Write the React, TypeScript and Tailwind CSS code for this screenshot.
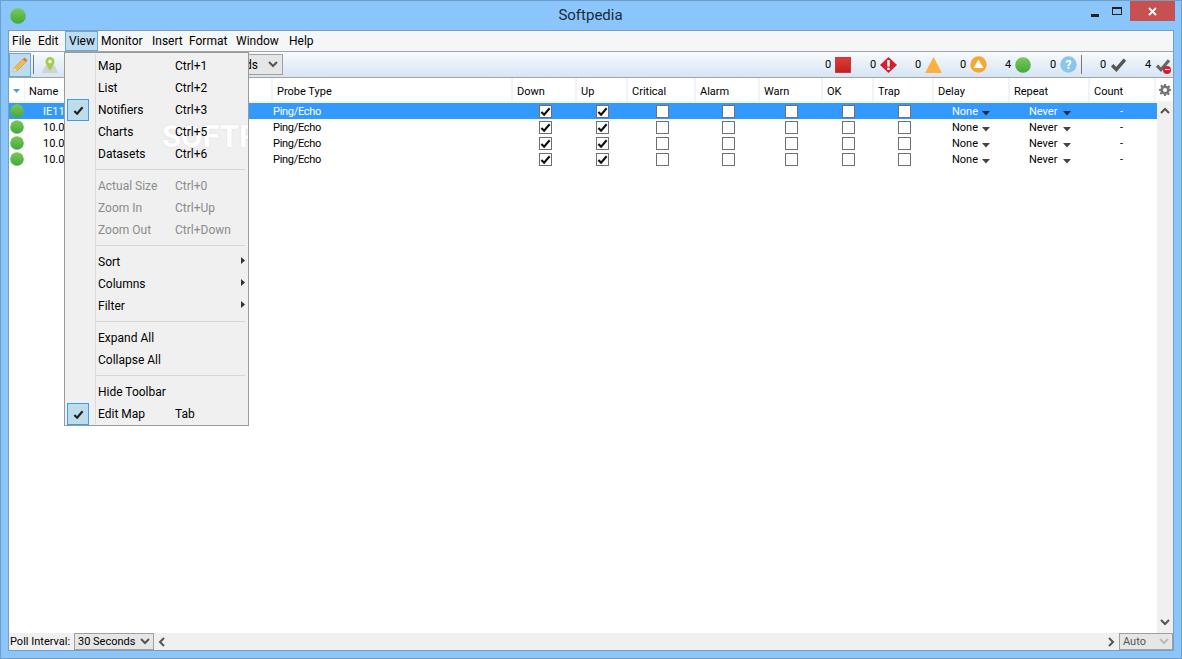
import React from 'react';

const font = { fontFamily: 'Tahoma, Roboto, sans-serif' };

const gridCols =
	'grid grid-cols-[15px_248px_240px_64px_51px_68px_64px_63px_51px_60px_76px_80px_66px]';

const columns = [
	'Probe Type',
	'Down',
	'Up',
	'Critical',
	'Alarm',
	'Warn',
	'OK',
	'Trap',
	'Delay',
	'Repeat',
	'Count',
];

const rows = ['IE11', '10.0', '10.0', '10.0'];

const menus = [
	{ label: 'File', cls: 'w-[26px]' },
	{ label: 'Edit', cls: 'w-[30px]' },
	{ label: 'View', cls: 'w-[33px] border border-[#69a7d6] bg-[#bcdcf2]' },
	{ label: 'Monitor', cls: 'w-[51px]' },
	{ label: 'Insert', cls: 'w-[37px]' },
	{ label: 'Format', cls: 'w-[47px]' },
	{ label: 'Window', cls: 'w-[53px]' },
	{ label: 'Help', cls: 'w-[35px]' },
];

const GreenDot: React.FC<{ size?: number }> = ({ size = 15 }) => (
	<svg width={size} height={size} viewBox="0 0 16 16" className="shrink-0">
		<defs>
			<linearGradient id="greenDot" x1="0" y1="0" x2="0" y2="1">
				<stop offset="0" stopColor="#7cc85a" />
				<stop offset="1" stopColor="#43a83c" />
			</linearGradient>
		</defs>
		<circle cx="8" cy="8" r="7.8" fill="url(#greenDot)" />
	</svg>
);

const CheckMark: React.FC<{ className?: string; size?: number }> = ({
	className = 'text-[#2b2b2b]',
	size = 11,
}) => (
	<svg width={size} height={size} viewBox="0 0 12 12" className={className}>
		<path d="M1.5 6.5 L4.5 9.5 L10.5 2.5" fill="none" stroke="currentColor" strokeWidth="2.4" />
	</svg>
);

const Box: React.FC<{ checked?: boolean }> = ({ checked }) => (
	<div className="flex h-[13px] w-[13px] items-center justify-center border border-[#707070] bg-white">
		{checked && <CheckMark size={11} className="text-[#111]" />}
	</div>
);

const Caret: React.FC<{ selected: boolean }> = ({ selected }) => (
	<svg width="8" height="5" viewBox="0 0 8 5" className="mt-[4px]">
		<path d="M0 0 H8 L4 4.5 Z" fill={selected ? '#1f2d45' : '#444'} />
	</svg>
);

const Chevron: React.FC<{ dir: 'up' | 'down' | 'left' | 'right'; color?: string }> = ({
	dir,
	color = '#555',
}) => {
	const d = {
		up: 'M1 6 L5 2 L9 6',
		down: 'M1 2 L5 6 L9 2',
		left: 'M6 1 L2 5 L6 9',
		right: 'M2 1 L6 5 L2 9',
	}[dir];
	return (
		<svg width="10" height="10" viewBox="0 0 10 10">
			<path d={d} fill="none" stroke={color} strokeWidth="2" />
		</svg>
	);
};

const StatusCount: React.FC<{ n: number; className: string; children: React.ReactNode }> = ({
	n,
	className,
	children,
}) => (
	<div className={`flex items-center gap-[4px] ${className}`}>
		<span className="w-[6px]">{n}</span>
		{children}
	</div>
);

const StatusBar = () => (
	<div className="ml-auto flex items-center">
		<StatusCount n={0} className="w-[45px]">
			<div className="h-4 w-4 border border-[#c93a3a] bg-gradient-to-b from-[#e03a3a] to-[#c02020]" />
		</StatusCount>
		<StatusCount n={0} className="w-[45px]">
			<svg width="17" height="16" viewBox="0 0 17 16">
				<path d="M8.5 0 L17 8 L8.5 16 L0 8 Z" fill="#d3202c" />
				<rect x="7.3" y="3" width="2.4" height="6.5" fill="#fff" />
				<rect x="7.3" y="10.6" width="2.4" height="2.4" fill="#fff" />
			</svg>
		</StatusCount>
		<StatusCount n={0} className="w-[45px]">
			<svg width="17" height="16" viewBox="0 0 17 16">
				<path d="M8.5 0 L17 16 H0 Z" fill="#fbb040" />
			</svg>
		</StatusCount>
		<StatusCount n={0} className="w-[45px]">
			<svg width="17" height="17" viewBox="0 0 17 17">
				<circle cx="8.5" cy="8.5" r="8.2" fill="#f6a830" />
				<path d="M8.5 3.5 L13.5 12 H3.500 Z" fill="#fff" />
			</svg>
		</StatusCount>
		<StatusCount n={4} className="w-[45px]">
			<GreenDot size={16} />
		</StatusCount>
		<StatusCount n={0} className="w-[26px]">
			<svg width="17" height="17" viewBox="0 0 17 17" className="shrink-0">
				<circle cx="8.5" cy="8.5" r="8.2" fill="#8cc4ea" />
				<text x="8.5" y="13" textAnchor="middle" fontSize="12" fontWeight="700" fill="#fff">
					?
				</text>
			</svg>
		</StatusCount>
		<div className="mr-[18px] ml-[5px] h-[19px] w-px bg-[#777]" />
		<StatusCount n={0} className="w-[45px]">
			<CheckMark size={17} className="text-[#555]" />
		</StatusCount>
		<div className="flex w-[28px] items-center gap-[4px]">
			<span className="w-[6px]">4</span>
			<div className="relative h-4 w-4 shrink-0">
				<CheckMark size={16} className="text-[#666]" />
				<div className="absolute right-0 bottom-[-1px] flex h-[8px] w-[8px] items-center justify-center rounded-full bg-[#d3202c]">
					<div className="h-[1px] w-[5px] bg-white" />
				</div>
			</div>
		</div>
	</div>
);

type MenuEntry = {
	label?: string;
	shortcut?: string;
	checked?: boolean;
	disabled?: boolean;
	sub?: boolean;
	gap?: boolean;
};

const viewMenu: MenuEntry[] = [
	{ label: 'Map', shortcut: 'Ctrl+1' },
	{ label: 'List', shortcut: 'Ctrl+2' },
	{ label: 'Notifiers', shortcut: 'Ctrl+3', checked: true },
	{ label: 'Charts', shortcut: 'Ctrl+5' },
	{ label: 'Datasets', shortcut: 'Ctrl+6' },
	{ gap: true },
	{ label: 'Actual Size', shortcut: 'Ctrl+0', disabled: true },
	{ label: 'Zoom In', shortcut: 'Ctrl+Up', disabled: true },
	{ label: 'Zoom Out', shortcut: 'Ctrl+Down', disabled: true },
	{ gap: true },
	{ label: 'Sort', sub: true },
	{ label: 'Columns', sub: true },
	{ label: 'Filter', sub: true },
	{ gap: true },
	{ label: 'Expand All' },
	{ label: 'Collapse All' },
	{ gap: true },
	{ label: 'Hide Toolbar' },
	{ label: 'Edit Map', shortcut: 'Tab', checked: true },
];

const ViewMenu = () => (
	<div className="absolute top-[51px] left-[63px] z-20 w-[185px] overflow-hidden border border-[#9a9a9a] bg-[#f0f0f0] pt-[2px] text-[12px]">
		{/* watermark sits under the menu entries */}
		<div className="absolute top-[68px] left-[97px] text-[31px] font-bold whitespace-nowrap text-white [text-shadow:0_0_2px_rgba(0,0,0,0.1)]">
			SOFTPEDIA
		</div>
		<div className="absolute top-[1px] bottom-[1px] left-[30px] w-px bg-[#dcdcdc]" />
		{viewMenu.map((item, i) =>
			item.gap ? (
				<div key={i} className="relative mt-[4px] mr-[3px] mb-[5px] ml-[31px] h-[1px] bg-[#d7d7d7]" />
			) : (
				<div
					key={i}
					className={`relative flex h-[22px] items-center pl-[33px] ${item.disabled ? 'text-[#8c8c8c]' : 'text-black'}`}
				>
					{item.checked && (
						<div className="absolute top-0 left-[2px] flex h-[22px] w-[22px] items-center justify-center border border-[#33a2e0] bg-[#bfdcec]">
							<CheckMark size={11} className="text-[#222]" />
						</div>
					)}
					<span className="w-[77px]">{item.label}</span>
					{item.shortcut && <span>{item.shortcut}</span>}
					{item.sub && (
						<svg width="4" height="7" viewBox="0 0 4 7" className="absolute top-[6px] right-[3px]">
							<path d="M0 0 L4 3.5 L0 7 Z" fill="#333" />
						</svg>
					)}
				</div>
			),
		)}
	</div>
);

const App = () => (
	<div
		className="relative flex h-[659px] w-[1182px] flex-col overflow-hidden border border-[#6f9fc9] bg-[#8ac5fb] text-[11px] leading-none text-black"
		style={font}
	>
		{/* title bar */}
		<div className="relative flex h-[29px] shrink-0 items-center">
			<div className="flex flex-1 items-center pl-[9px]">
				<GreenDot size={16} />
			</div>
			<div className="mr-[10px] text-[15px] text-[#1c2b3a]">Softpedia</div>
			<div className="mb-[9px] flex flex-1 items-center justify-end">
				<div className="mt-[9px] mr-[13px] h-[3px] w-[8px] bg-[#222]" />
				<div className="mr-[8px] h-[8px] w-[10px] border border-t-2 border-[#222]" />
				<div className="flex h-[20px] w-[45px] items-center justify-center bg-[#c75050] text-white">
					<svg width="9" height="9" viewBox="0 0 9 9">
						<path d="M1 1 L8 8 M8 1 L1 8" stroke="#fff" strokeWidth="1.8" />
					</svg>
				</div>
				<div className="w-[6px]" />
			</div>
		</div>

		{/* client area */}
		<div className="mx-[7px] mb-[7px] flex min-h-0 flex-1 flex-col border border-[#7a9ebc] bg-white">
			{/* menu bar */}
			<div className="flex h-[20px] shrink-0 items-center bg-[#f5f6f7] text-[12px]">
				{menus.map((m) => (
					<div key={m.label} className={`flex h-[20px] items-center pl-[3px] ${m.cls}`}>
						{m.label}
					</div>
				))}
			</div>

			{/* toolbar */}
			<div className="flex h-[27px] shrink-0 items-center border-t border-b border-[#a3a3a3] bg-gradient-to-b from-[#f8fafc] to-[#d6e5f5]">
				<div className="flex h-[24px] w-[22px] items-center justify-center border border-[#6aa8d8] bg-[#bcdcf2]">
					<svg width="18" height="18" viewBox="0 0 18 18">
						<path d="M3 12 L12 3 L15 6 L6 15 L2 16 Z" fill="#f6b84a" stroke="#b98a3a" strokeWidth="0.5" />
						<path d="M12 3 L13.5 1.5 L16.5 4.5 L15 6 Z" fill="#e86a4a" />
						<path d="M3 12 L6 15 L2 16 Z" fill="#e8e0c8" />
					</svg>
				</div>
				<div className="mr-[7px] ml-[2px] h-[19px] w-px bg-[#777]" />
				<svg width="18" height="18" viewBox="0 0 18 18">
					<path d="M1 17 L4 10 H14 L17 17 Z" fill="#cfd3d6" />
					<path d="M9 15 C6 10 4.5 8 4.5 5.500 A4.5 4.5 0 0 1 13.5 5.5 C13.5 8 12 10 9 15 Z" fill="#a5cc4a" />
					<circle cx="9" cy="5.5" r="1.7" fill="#fff" />
				</svg>
				<div className="ml-[177px] flex h-[21px] w-[47px] items-center justify-end gap-[10px] border border-[#a0a0a0] bg-[#e6e6e6] pr-[4px] text-[12px]">
					<span>ds</span>
					<Chevron dir="down" />
				</div>
				<StatusBar />
			</div>

			{/* header */}
			<div className={`${gridCols} relative h-[25px] shrink-0 items-stretch bg-[#f0f4f9] pb-[2px]`}>
				<div className="flex items-center justify-center bg-white pt-[3px]">
					<svg width="7" height="4" viewBox="0 0 7 4">
						<path d="M0 0 H7 L3.5 4 Z" fill="#5b9bd5" />
					</svg>
				</div>
				<div className="mr-[1px] ml-[1px] flex items-center bg-white pt-[3px] pl-[4px]">Name</div>
				{columns.map((label) => (
					<div key={label} className="mr-[1px] ml-[1px] flex items-center bg-white pt-[3px] pl-[4px]">
						{label}
					</div>
				))}
				<div className="absolute top-0 right-0 flex h-[23px] w-[17px] items-center justify-center bg-white">
					<svg width="12" height="12" viewBox="0 0 24 24">
						<path
							d="M10 0h4l.7 3.400 2.200.9 2.900-1.900 2.800 2.800-1.900 2.900.9 2.200L24 10v4l-3.400.7-.9 2.200 1.900 2.900-2.800 2.800-2.900-1.900-2.200.9L14 24h-4l-.7-3.400-2.200-.9-2.900 1.900-2.800-2.800 1.900-2.900-.9-2.200L0 14v-4l3.400-.7.9-2.200-1.900-2.900 2.800-2.800 2.900 1.900 2.200-.9z M12 8a4 4 0 1 0 0 8 4 4 0 0 0 0-8z"
							fill="#777"
							fillRule="evenodd"
						/>
					</svg>
				</div>
			</div>

			{/* table body */}
			<div className="flex min-h-0 flex-1">
				<div className="min-w-0 flex-1">
					{rows.map((name, i) => {
						const selected = i === 0;
						return (
							<div
								key={i}
								className={`${gridCols} h-[16px] items-center ${selected ? 'bg-[#3399ff] text-white' : 'text-black'}`}
							>
								<div className="col-span-2 flex items-center pl-[1px]">
									<GreenDot size={14} />
									<span className="ml-[19px]">{name}</span>
								</div>
								<div className="pl-[1px] tracking-[-0.3px]">Ping/Echo</div>
								{[true, true, false, false, false, false, false].map((checked, c) => (
									<div key={c} className="flex justify-center pl-[2px]">
										<Box checked={checked} />
									</div>
								))}
								<div className="flex items-center pl-[19px]">
									<span className="w-[30px]">None</span>
									<Caret selected={selected} />
								</div>
								<div className="flex items-center pl-[20px]">
									<span className="w-[34px]">Never</span>
									<Caret selected={selected} />
								</div>
								<div className="pl-[31px]">-</div>
							</div>
						);
					})}
				</div>
				<div className="flex w-[16px] shrink-0 flex-col items-center justify-between bg-[#f0f0f0] pt-[4px] pb-[5px]">
					<Chevron dir="up" />
					<Chevron dir="down" />
				</div>
			</div>

			{/* bottom bar */}
			<div className="flex h-[17px] shrink-0 items-center bg-[#f0f0f0]">
				<span className="ml-[1px] w-[64px]">Poll Interval:</span>
				<div className="flex h-[17px] w-[80px] items-center justify-between border border-[#a0a0a0] bg-[#e6e6e6] pr-[3px] pl-[3px]">
					<span className="whitespace-nowrap">30 Seconds</span>
					<Chevron dir="down" />
				</div>
				<div className="ml-[4px]">
					<Chevron dir="left" />
				</div>
				<div className="mr-[2px] ml-auto">
					<Chevron dir="right" />
				</div>
				<div className="flex h-[17px] w-[54px] items-center justify-between border border-[#a0a0a0] bg-[#e6e6e6] px-[3px] text-[#555]">
					<span>Auto</span>
					<Chevron dir="down" color="#bbb" />
				</div>
			</div>
		</div>

		<ViewMenu />
	</div>
);

export default App;
